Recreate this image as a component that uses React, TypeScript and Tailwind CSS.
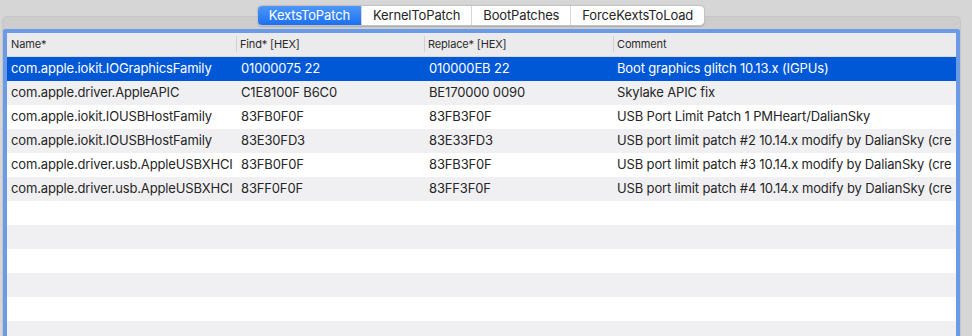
import React from "react";

const rows = [
  ["com.apple.iokit.IOGraphicsFamily", "01000075 22", "010000EB 22", "Boot graphics glitch 10.13.x (IGPUs)"],
  ["com.apple.driver.AppleAPIC", "C1E8100F B6C0", "BE170000 0090", "Skylake APIC fix"],
  ["com.apple.iokit.IOUSBHostFamily", "83FB0F0F", "83FB3F0F", "USB Port Limit Patch 1 PMHeart/DalianSky"],
  ["com.apple.iokit.IOUSBHostFamily", "83E30FD3", "83E33FD3", "USB port limit patch #2 10.14.x modify by DalianSky (cre"],
  ["com.apple.driver.usb.AppleUSBXHCI", "83FB0F0F", "83FB3F0F", "USB port limit patch #3 10.14.x modify by DalianSky (cre"],
  ["com.apple.driver.usb.AppleUSBXHCI", "83FF0F0F", "83FF3F0F", "USB port limit patch #4 10.14.x modify by DalianSky (cre"],
];

const tabs = ["KextsToPatch", "KernelToPatch", "BootPatches", "ForceKextsToLoad"];

export default function App() {
  const empty = Array.from({ length: 6 });
  return (
    <div
      className="w-[972px] h-[336px] overflow-hidden bg-[#d6d6d6] flex flex-col tracking-[-0.15px]"
      style={{ fontFamily: "Inter, 'Liberation Sans', sans-serif" }}
    >
      <div className="relative z-10 flex justify-center pt-[5px] pr-[10px]">
        <div className="flex h-[21px] rounded-[5px] border border-[#c3c3c3] bg-white text-[13px] text-[#262626] overflow-hidden shadow-[0_0.5px_1px_rgba(0,0,0,0.15)]">
          {tabs.map((t, i) => (
            <div
              key={t}
              className={
                i === 0
                  ? "flex items-center px-[11px] bg-gradient-to-b from-[#4d97f9] to-[#1b6ff2] text-white"
                  : "flex items-center px-[11px] border-l border-[#d6d6d6]"
              }
            >
              {t}
            </div>
          ))}
        </div>
      </div>
      <div className="mt-[-10px] ml-[2px] w-[959px] flex-1 rounded-t-[5px] border border-[#c6c6c6] border-b-0 bg-[#cdcdcd] pt-[12px] px-0">
        <div className="h-full border-[4px] border-b-0 border-[#6b9be6] rounded-t-[3px] bg-white overflow-hidden text-[13px] text-[#262626]">
          <div className="flex h-[24px] bg-[#ebebed] border-b border-[#d9d9d9] text-[11px] text-[#2a2a2a]">
            <div className="w-[229px] flex items-center pl-[4px]">Name*</div>
            <div className="w-[188px] flex items-center pl-[4px] relative">
              <span className="absolute left-0 top-[3px] bottom-[4px] w-px bg-[#d2d2d2]" />
              Find* [HEX]
            </div>
            <div className="w-[189px] flex items-center pl-[4px] relative">
              <span className="absolute left-0 top-[3px] bottom-[4px] w-px bg-[#d2d2d2]" />
              Replace* [HEX]
            </div>
            <div className="flex-1 flex items-center pl-[4px] relative">
              <span className="absolute left-0 top-[3px] bottom-[4px] w-px bg-[#d2d2d2]" />
              Comment
            </div>
          </div>
          {rows.map((r, i) => (
            <div
              key={i}
              className={
                "flex h-[24px] items-center whitespace-nowrap " +
                (i === 0 ? "bg-[#0058d6] text-white" : i % 2 === 1 ? "bg-[#f0f0f2]" : "bg-white")
              }
            >
              <div className="w-[229px] pl-[4px] overflow-hidden">{r[0]}</div>
              <div className="w-[188px] pl-[5px] overflow-hidden">{r[1]}</div>
              <div className="w-[189px] pl-[5px] overflow-hidden">{r[2]}</div>
              <div className="flex-1 pl-[4px] overflow-hidden">{r[3]}</div>
            </div>
          ))}
          {empty.map((_, i) => (
            <div key={"e" + i} className={"h-[24px] " + (i % 2 === 1 ? "bg-[#f0f0f2]" : "bg-white")} />
          ))}
        </div>
      </div>
    </div>
  );
}
